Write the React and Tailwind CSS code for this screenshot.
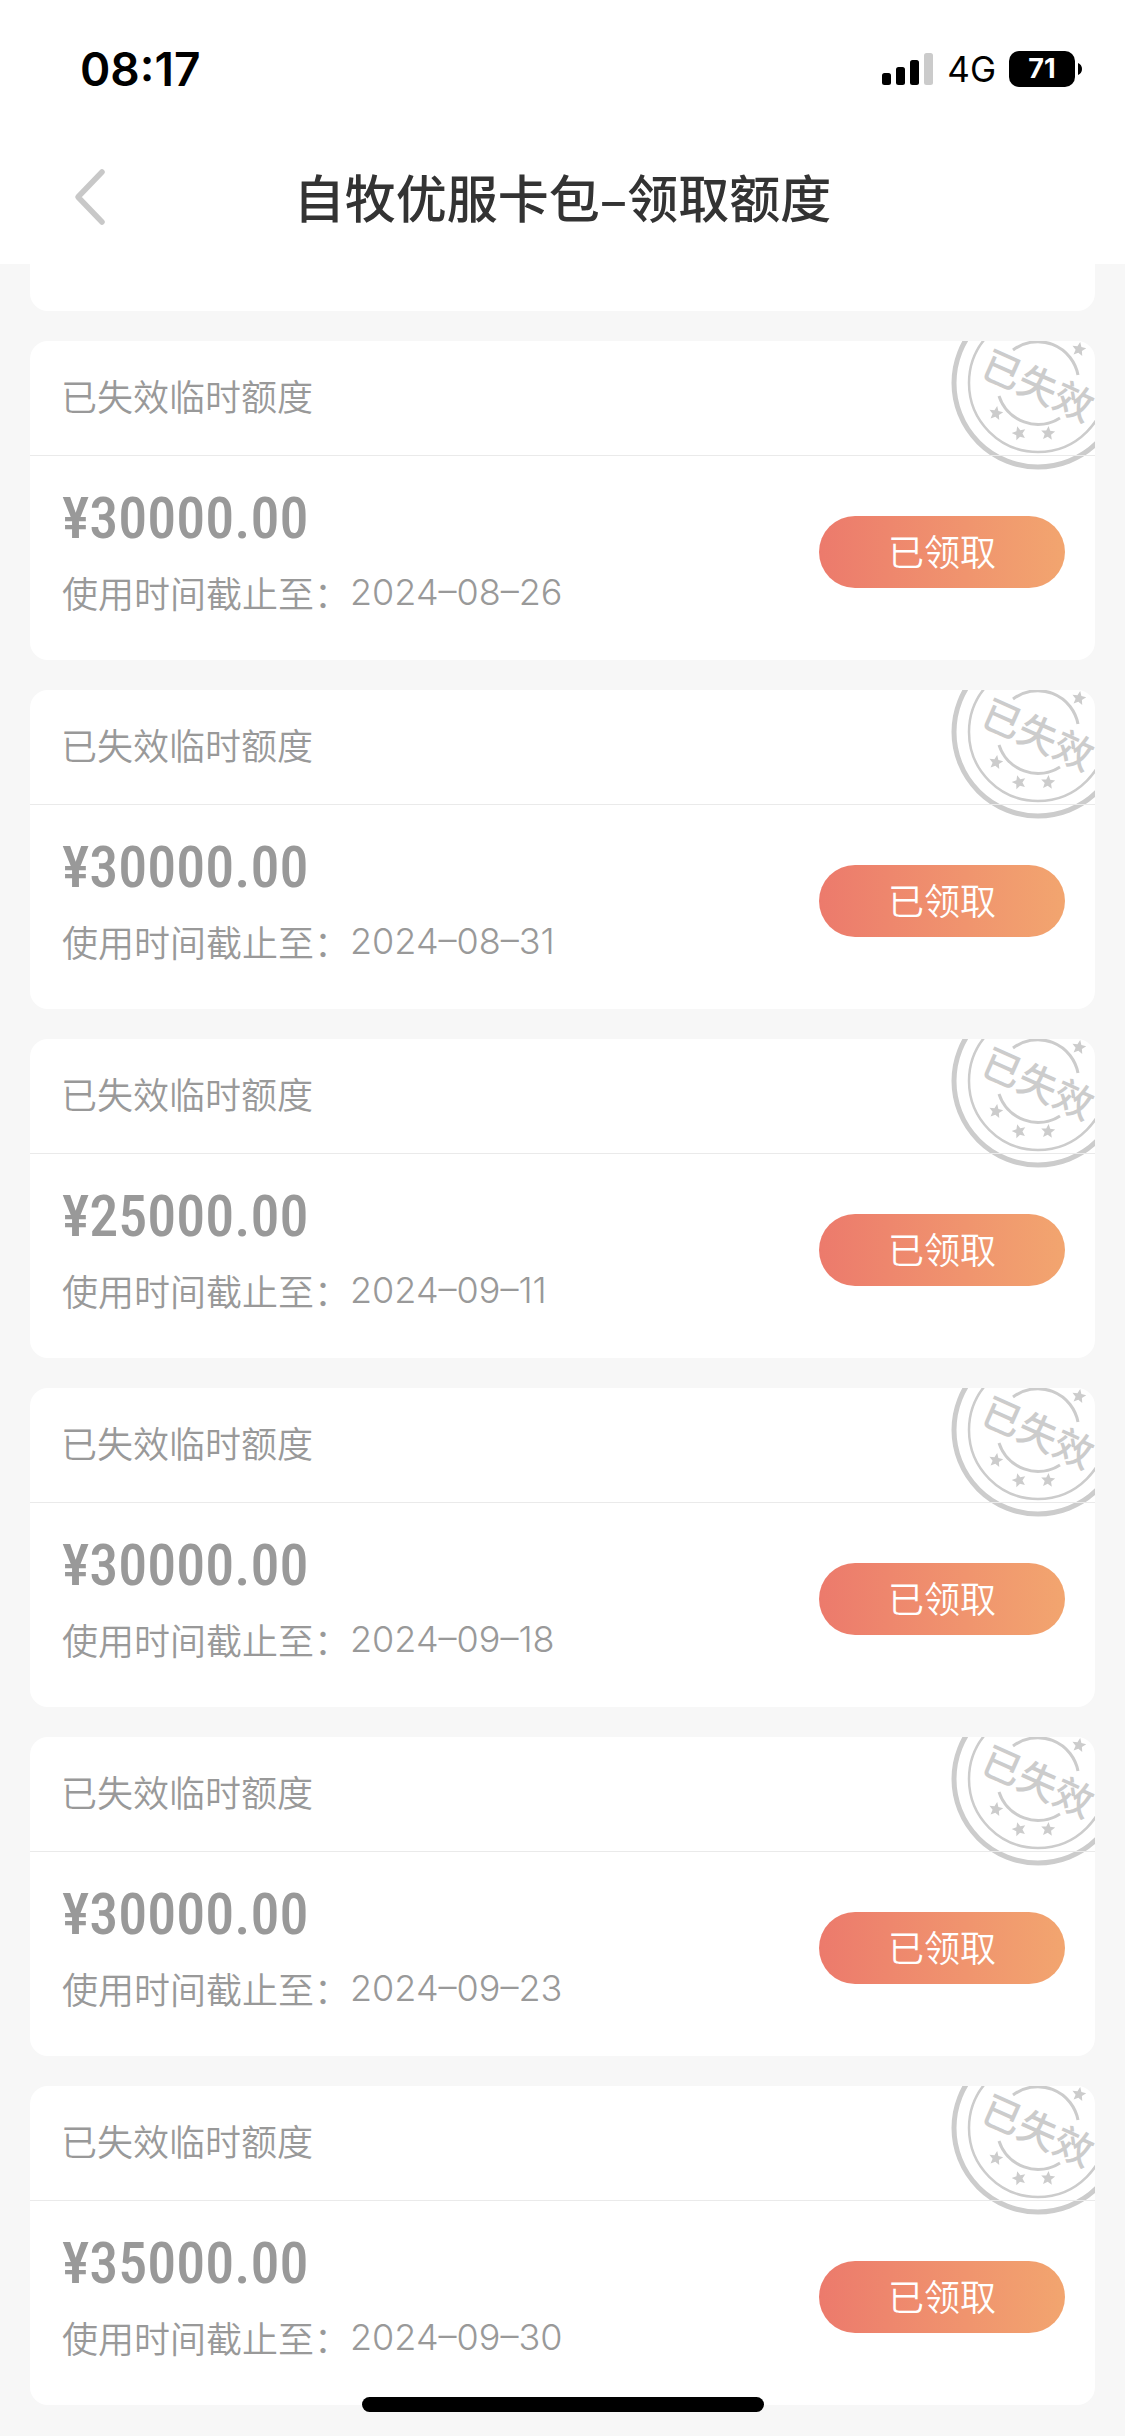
import React from "react";

const quotas = [
  { id: 1, amount: "30000.00", deadline: "2024–08–26" },
  { id: 2, amount: "30000.00", deadline: "2024–08–31" },
  { id: 3, amount: "25000.00", deadline: "2024–09–11" },
  { id: 4, amount: "30000.00", deadline: "2024–09–18" },
  { id: 5, amount: "30000.00", deadline: "2024–09–23" },
  { id: 6, amount: "35000.00", deadline: "2024–09–30" },
];

const STAR = "M0 -7L2 -2.4L7 -2L3.2 1.4L4.4 6.4L0 3.8L-4.4 6.4L-3.2 1.4L-7 -2L-2 -2.4Z";

function StatusBar() {
  return (
    <div className="flex items-center justify-between pt-[42px] pl-20 pr-[43px]">
      <span className="font-['Inter',sans-serif] text-[46px] leading-[54px] font-semibold text-black">
        08:17
      </span>
      <div className="flex items-center gap-[13px]">
        <svg className="w-[52px] h-8" viewBox="0 0 52 32" aria-hidden="true">
          <rect x="0" y="20" width="9" height="12" rx="2.5" />
          <rect x="14" y="14" width="9" height="18" rx="2.5" />
          <rect x="28" y="7" width="9" height="25" rx="2.5" />
          <rect x="42" y="0" width="9" height="32" rx="2.5" fill="#cbcbcb" />
        </svg>
        <span className="font-['Inter',sans-serif] text-[35px] leading-[54px] text-black">4G</span>
        <div className="flex items-center gap-[3px]">
          <span className="flex h-9 w-[66px] items-center justify-center rounded-[10px] bg-black font-['Inter',sans-serif] text-[27px] leading-9 font-bold text-white">
            71
          </span>
          <svg className="w-1 h-3" viewBox="0 0 4 12" aria-hidden="true">
            <path d="M0 0C2.5 1 4 3.300 4 6S2.500 11 0 12Z" />
          </svg>
        </div>
      </div>
    </div>
  );
}

function TopBar() {
  return (
    <div className="grid grid-cols-[1fr_auto_1fr] items-center pt-[57px] pb-[25px] px-[70px]">
      <button type="button" aria-label="返回" className="justify-self-start">
        <svg className="w-9 h-[60px]" viewBox="0 0 36 60" fill="none" aria-hidden="true">
          <path
            d="M32 6L8 31L32 56"
            stroke="#c8c8c8"
            strokeWidth="5.5"
            strokeLinecap="round"
            strokeLinejoin="round"
          />
        </svg>
      </button>
      <h1 className="text-[51px] leading-[86px] font-medium text-[#333333]">
        自牧优服卡包–领取额度
      </h1>
    </div>
  );
}

function Stamp() {
  return (
    <svg
      className="absolute -top-[45px] -right-[30px] size-[174px]"
      viewBox="0 0 174 174"
      fill="none"
      stroke="#cccccc"
      aria-hidden="true"
    >
      <circle cx="87" cy="87" r="84" strokeWidth="5" />
      <circle cx="87" cy="87" r="69" strokeWidth="2.5" />
      <path d="M62 54A41 41 0 0 1 127 79" strokeWidth="3" />
      <path d="M48 100A41 41 0 0 0 109 122" strokeWidth="3" />
      <g fill="#cccccc" stroke="none">
        <path d={STAR} transform="translate(45 117) rotate(10)" />
        <path d={STAR} transform="translate(68 137) rotate(-15)" />
        <path d={STAR} transform="translate(97 137) rotate(5)" />
        <path d={STAR} transform="translate(128 53) rotate(10)" />
        <text
          transform="translate(87 90) rotate(24)"
          textAnchor="middle"
          y="14"
          className="text-[39px] font-medium"
        >
          已失效
        </text>
      </g>
    </svg>
  );
}

function QuotaCard({ amount, deadline }) {
  return (
    <li className="relative overflow-hidden rounded-[18px] bg-white text-[#999999]">
      <Stamp />
      <h2 className="relative border-b border-[#eaeaea] px-[31px] pt-[29px] pb-[35px] text-[36px] leading-[50px] font-[350]">
        已失效临时额度
      </h2>
      <div className="flex items-center justify-between pl-8 pr-[30px] pt-[31px] pb-[43px]">
        <div className="flex flex-col gap-[18px]">
          <p className="font-['Roboto_Condensed','Roboto',sans-serif] text-[58px] leading-[62px] font-medium">
            ¥{amount}
          </p>
          <p className="flex items-center text-[36px] leading-[50px] font-[350]">
            使用时间截止至：
            <span className="font-['Inter',sans-serif] font-light">{deadline}</span>
          </p>
        </div>
        <button
          type="button"
          className="h-[72px] w-[246px] rounded-full bg-linear-to-r from-[#ec7a6c] to-[#f2a56f] pb-1 text-[36px] font-[350] text-white"
        >
          已领取
        </button>
      </div>
    </li>
  );
}

function App() {
  return (
    <div className="min-h-screen bg-[#f7f7f7] font-['Noto_Sans_CJK_SC',sans-serif]">
      <header className="bg-white">
        <StatusBar />
        <TopBar />
      </header>

      <main className="px-[30px] pb-[30px]">
        <div className="h-[47px] rounded-b-[18px] bg-white" />
        <ul className="mt-[30px] flex flex-col gap-[30px]">
          {quotas.map((quota) => (
            <QuotaCard key={quota.id} amount={quota.amount} deadline={quota.deadline} />
          ))}
        </ul>
      </main>

      <div className="fixed bottom-6 left-1/2 h-[15px] w-[402px] -translate-x-1/2 rounded-full bg-black" />
    </div>
  );
}

export default App;
